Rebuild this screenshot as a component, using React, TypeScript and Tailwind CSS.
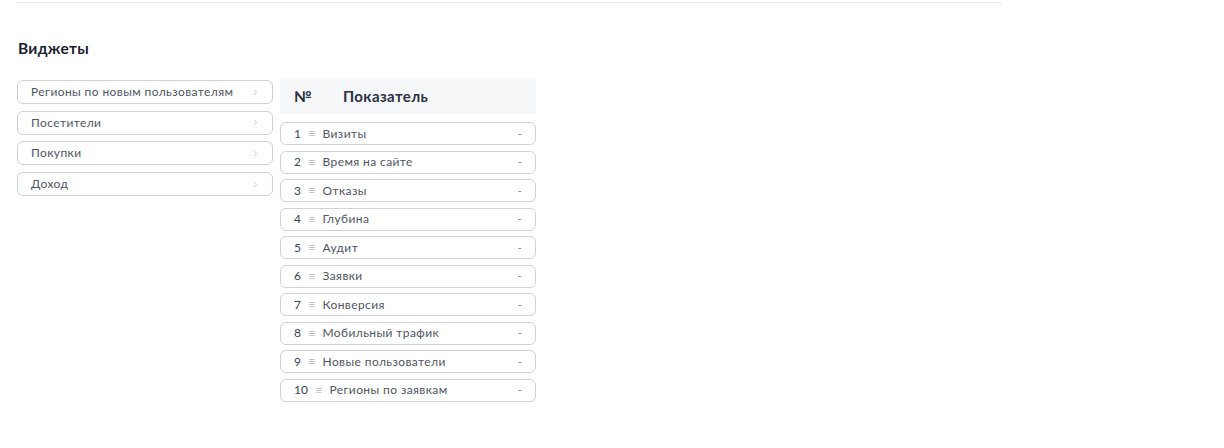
import { ChevronRight } from 'lucide-react'

const widgets = ['Регионы по новым пользователям', 'Посетители', 'Покупки', 'Доход']

const metrics = [
  'Визиты',
  'Время на сайте',
  'Отказы',
  'Глубина',
  'Аудит',
  'Заявки',
  'Конверсия',
  'Мобильный трафик',
  'Новые пользователи',
  'Регионы по заявкам',
]

export default function App() {
  return (
    <div className="w-[1224px] h-[448px] bg-white px-[17px] text-[#4f5563]" style={{ fontFamily: 'Lato, "Noto Sans", sans-serif' }}>
      <div className="pt-[2px]">
        <div className="w-[985px] h-px bg-[#e5e6e8]" />
      </div>

      <h2 className="mt-[35px] text-[15.5px] leading-[20px] font-bold tracking-[0.3px] text-[#1c2130] ml-px">Виджеты</h2>

      <div className="mt-[21px] flex gap-[7px] items-start">
        {/* СПИСОК ВИДЖЕТОВ */}
        <div className="w-[256px] flex flex-col gap-[6.7px] pt-px">
          {widgets.map(w => (
            <div key={w} className="h-[24px] border border-[#cfd1d5] rounded-[6px] flex items-center justify-between pl-[13px] pr-[12px]">
              <span className="text-[12px] tracking-[0.4px]">{w}</span>
              <ChevronRight size={9} strokeWidth={1.5} className="text-[#9aa0aa]" />
            </div>
          ))}
        </div>

        {/* ТАБЛИЦА ПОКАЗАТЕЛЕЙ */}
        <div className="w-[256px]">
          <div className="h-[35px] bg-[#f6f7f9] flex items-center text-[15px] font-bold tracking-[0.4px] text-[#2a3142]">
            <span className="w-[63px] pl-[14px]">№</span>
            <span>Показатель</span>
          </div>
          <div className="mt-[8px] flex flex-col gap-[5.55px]">
            {metrics.map((m, i) => (
              <div key={m} className="h-[23px] border border-[#cfd1d5] rounded-[6px] flex items-center pl-[13px] pr-[13px] text-[12px]">
                <span className="text-[#3c4252]">{i + 1}</span>
                <span className="ml-[7px] text-[#bfc3c9] text-[13px] leading-none">≡</span>
                <span className="ml-[7px] tracking-[0.4px]">{m}</span>
                <span className="ml-auto text-[#8a909a]">-</span>
              </div>
            ))}
          </div>
        </div>
      </div>
    </div>
  )
}
